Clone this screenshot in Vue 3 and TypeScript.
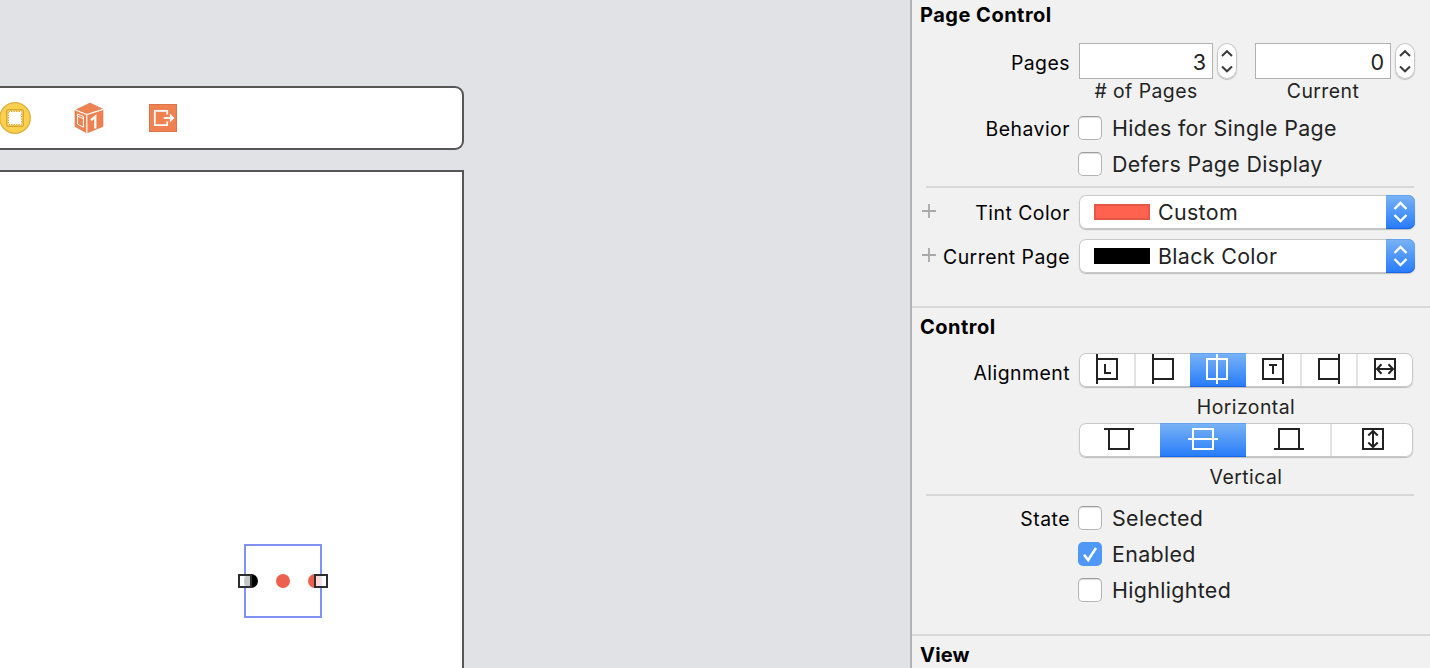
<script setup lang="ts">
import { ref } from 'vue'

interface Segment {
  id: string
  width: number
  divider: boolean
}

const horizontal: Segment[] = [
  { id: 'leading', width: 57, divider: true },
  { id: 'left', width: 54, divider: false },
  { id: 'center', width: 56, divider: false },
  { id: 'trailing', width: 56, divider: true },
  { id: 'right', width: 56, divider: true },
  { id: 'fill', width: 55, divider: false },
]
const vertical: Segment[] = [
  { id: 'top', width: 81, divider: false },
  { id: 'middle', width: 86, divider: false },
  { id: 'bottom', width: 86, divider: true },
  { id: 'stretch', width: 81, divider: false },
]
const hAlign = ref('center')
const vAlign = ref('middle')

const hIcons: Record<string, string> = {
  leading: 'M1 0V30M1 5H21V25H1M9 10V20M8 19H15',
  left: 'M1 0V30M1 5H21V25H1',
  center: 'M1 5H21V25H1ZM11 0V30',
  trailing: 'M21 0V30M21 5H1V25H21M7 11H15M11 11V20',
  right: 'M21 0V30M21 5H1V25H21',
  fill: 'M1 5H21V25H1ZM3 15H19',
}
const vIcons: Record<string, string> = {
  top: 'M0 1H30M5 1V21H25V1',
  middle: 'M5 1H25V21H5ZM0 11H30',
  bottom: 'M0 21H30M5 21V1H25V21',
  stretch: 'M5 1H25V21H5ZM15 3V19',
}

const popups = ref([
  { label: 'Tint Color', value: 'Custom', kind: 'custom' },
  { label: 'Current Page', value: 'Black Color', kind: 'black' },
])
const behaviors = ref([
  { label: 'Behavior', text: 'Hides for Single Page', on: false },
  { label: '', text: 'Defers Page Display', on: false },
])
const states = ref([
  { label: 'State', text: 'Selected', on: false },
  { label: '', text: 'Enabled', on: true },
  { label: '', text: 'Highlighted', on: false },
])
const numbers = ref([
  { value: 3, caption: '# of Pages', cls: 'count' },
  { value: 0, caption: 'Current', cls: 'index' },
])
</script>

<template>
  <div class="window">
    <main class="canvas">
      <div class="dock">
        <svg class="controller" width="32" height="32" viewBox="0 0 32 32">
          <circle cx="16" cy="16" r="15.3" fill="#fad04d" stroke="#deae3f" stroke-width="1.3" />
          <rect x="7.5" y="7.5" width="17" height="17" rx="1.5" fill="#f1c24b" stroke="#d9a63a" />
          <rect x="9" y="9" width="14" height="14" fill="#fff" />
          <rect x="9.5" y="9.5" width="13" height="13" fill="none" stroke="#e3ad35" stroke-dasharray="1.5 1" />
        </svg>
        <svg class="cube" width="30" height="32" viewBox="0 0 30 32">
          <path d="M1 8.2 16 1 29 7.2V24.5L12.8 31 1 24.5Z" fill="#ee8150" />
          <path d="M1 8.2 16 1 29 7.2V24.5L12.8 31 1 24.5Z" fill="none" stroke="#d97448" stroke-width=".6" />
          <path d="M1 7.8 12.8 12.5 29 7.4M12.8 12.5V31" fill="none" stroke="#fff" stroke-width="1.2" />
          <path d="M3.6 12 9.4 14.4V25.2L3.6 22.2ZM3.6 14.2 9.4 16.6" fill="none" stroke="#fff" stroke-width="1" />
          <path d="M17 18.2 21.3 14.6V26.5" fill="none" stroke="#fff" stroke-width="2.2" />
        </svg>
        <svg class="exit" width="28" height="28" viewBox="0 0 28 28">
          <rect x=".5" y=".5" width="27" height="27" fill="#ef8250" stroke="#dc744a" />
          <path d="M18.2 10.6V6.9H5.8V21.1H18.2V17.4" fill="none" stroke="#fff" stroke-width="1.8" />
          <path d="M14.7 14H22" stroke="#fff" stroke-width="1.8" />
          <path d="M20.8 9.6 25.4 14 20.8 18.4Z" fill="#fff" />
        </svg>
      </div>
      <div class="scene">
        <div class="selection">
          <i class="dot first"></i>
          <i class="dot second"></i>
          <i class="dot third"></i>
          <i class="handle west"></i>
          <i class="handle east"></i>
        </div>
      </div>
    </main>

    <aside class="inspector">
      <section class="page-control">
        <h2>Page Control</h2>
        <div class="row pages">
          <label>Pages</label>
          <div v-for="n in numbers" :key="n.caption" class="number" :class="n.cls">
            <div class="entry">
              <span class="field">{{ n.value }}</span>
              <svg class="stepper" width="20" height="36" viewBox="0 0 20 36">
                <path d="M5 13 10 8.2 15 13M5 23.5 10 28.3 15 23.5" fill="none" stroke="#3b3b3b" stroke-width="2" />
              </svg>
            </div>
            <span class="caption">{{ n.caption }}</span>
          </div>
        </div>
        <div v-for="b in behaviors" :key="b.text" class="row check">
          <label>{{ b.label }}</label>
          <span class="box" @click="b.on = !b.on"></span>
          <span class="text">{{ b.text }}</span>
        </div>
        <hr />
        <div v-for="p in popups" :key="p.label" class="row popup-row">
          <svg class="plus" width="14" height="14" viewBox="0 0 14 14">
            <path d="M0 7H14M7 0V14" stroke="#a9a9a9" stroke-width="1.8" />
          </svg>
          <label>{{ p.label }}</label>
          <div class="popup">
            <span class="swatch" :class="p.kind"></span>
            <span class="text">{{ p.value }}</span>
            <svg class="arrows" width="29" height="34" viewBox="0 0 29 34">
              <path d="M8.5 14 14.5 8 20.5 14M8.5 20 14.5 26 20.5 20" fill="none" stroke="#fff" stroke-width="2.3" />
            </svg>
          </div>
        </div>
      </section>

      <section class="control">
        <h2>Control</h2>
        <div class="row align">
          <label>Alignment</label>
          <div class="groups">
            <div class="segments across">
              <button
                v-for="s in horizontal"
                :key="s.id"
                :class="{ on: s.id === hAlign, divider: s.divider }"
                :style="{ width: s.width + 'px' }"
                @click="hAlign = s.id"
              >
                <svg width="22" height="30" viewBox="0 0 22 30">
                  <path :d="hIcons[s.id]" />
                  <path v-if="s.id === 'fill'" d="M7.5 10.3 3 15 7.5 19.7M14.5 10.3 19 15 14.5 19.7" />
                </svg>
              </button>
            </div>
            <span class="caption">Horizontal</span>
            <div class="segments upright">
              <button
                v-for="s in vertical"
                :key="s.id"
                :class="[s.id, { on: s.id === vAlign, divider: s.divider }]"
                :style="{ width: s.width + 'px' }"
                @click="vAlign = s.id"
              >
                <svg width="30" height="22" viewBox="0 0 30 22">
                  <path :d="vIcons[s.id]" />
                  <path v-if="s.id === 'stretch'" d="M10.3 7.5 15 3 19.7 7.5M10.3 14.5 15 19 19.7 14.5" />
                </svg>
              </button>
            </div>
            <span class="caption">Vertical</span>
          </div>
        </div>
        <hr />
        <div v-for="s in states" :key="s.text" class="row check">
          <label>{{ s.label }}</label>
          <span class="box" :class="{ on: s.on }" @click="s.on = !s.on">
            <svg v-if="s.on" width="24" height="24" viewBox="0 0 24 24">
              <path d="M6 12.8 10.2 18 18 6" fill="none" stroke="#fff" stroke-width="2.5" />
            </svg>
          </span>
          <span class="text">{{ s.text }}</span>
        </div>
      </section>

      <section class="view">
        <h2>View</h2>
      </section>
    </aside>
  </div>
</template>

<style>
body {
  margin: 0;
  overflow: hidden;
}
</style>

<style scoped>
* {
  box-sizing: border-box;
}
.window {
  display: flex;
  width: 1430px;
  height: 668px;
  overflow: hidden;
  background: #e1e2e6;
  font: 19.4px/24px Inter, Roboto, 'Liberation Sans', sans-serif;
  color: #232323;
}
.canvas {
  width: 910px;
  padding-top: 86px;
}
.dock {
  display: flex;
  align-items: center;
  width: 464px;
  height: 64px;
  border: 2px solid #565656;
  border-left: 0;
  border-radius: 0 9px 9px 0;
  background: #fff;
}
.controller {
  margin-left: -1px;
}
.cube {
  margin-left: 43px;
}
.exit {
  margin-left: 45px;
}
.scene {
  position: relative;
  width: 464px;
  height: 500px;
  margin-top: 20px;
  border: solid #565656;
  border-width: 2px 2px 0 0;
  background: #fff;
}
.selection {
  position: absolute;
  left: 244px;
  top: 372px;
  width: 78px;
  height: 74px;
  border: 2px solid #8092f5;
}
.dot,
.handle {
  position: absolute;
  width: 14px;
  height: 14px;
  top: 28px;
}
.dot {
  border-radius: 50%;
  background: #ee5f4d;
}
.first {
  left: -2px;
  background: #000;
}
.second {
  left: 30px;
}
.third {
  left: 62px;
}
.handle {
  border: 2px solid #2e2e2e;
  background: rgba(255, 255, 255, 0.78);
}
.west {
  left: -8px;
}
.east {
  left: 68px;
}
.inspector {
  width: 520px;
  border-left: 2px solid #b2b3b6;
  background: #f1f1f1;
}
section {
  border-bottom: 2px solid #d8d8d8;
}
.page-control {
  height: 308px;
}
.control {
  height: 328px;
}
.view {
  border: 0;
}
h2 {
  margin: 0;
  padding: 7px 0 0 8px;
  font-size: 20px;
  line-height: 24px;
  font-weight: 700;
  letter-spacing: 0.5px;
  color: #000;
}
.page-control h2 {
  padding-top: 3px;
}
.view h2 {
  letter-spacing: 0.2px;
}
.row {
  display: flex;
}
label {
  width: 158px;
  margin-right: -1px;
  text-align: right;
  letter-spacing: 0.48px;
  color: #000;
  white-space: nowrap;
}
hr {
  height: 2px;
  margin: 0 16px 0 14px;
  border: 0;
  background: #d8d8d8;
}
.pages {
  height: 67px;
  margin-top: 16px;
}
.pages label {
  padding-top: 8px;
}
.number {
  display: flex;
  flex-direction: column;
}
.count {
  margin-left: 10px;
}
.index {
  margin-left: 18px;
}
.entry {
  display: flex;
  gap: 4px;
}
.field {
  width: 134px;
  height: 36px;
  padding: 0 6px;
  border: 1px solid #b1b1b1;
  background: #fff;
  font-size: 21.6px;
  line-height: 36px;
  text-align: right;
}
.index .field {
  width: 136px;
}
.stepper {
  border-radius: 10px;
  background: #fff;
  box-shadow: inset 0 0 0 1px #c6c6c6, 0 1px 1px #bbb;
}
.caption {
  width: 134px;
  text-align: center;
  letter-spacing: 0.45px;
  white-space: nowrap;
}
.index .caption {
  width: 136px;
}
.check {
  height: 36px;
  align-items: center;
}
.check label {
  padding-top: 2px;
}
.text {
  font-size: 21.4px;
  line-height: 26px;
  letter-spacing: 0.34px;
  white-space: nowrap;
}
.box {
  width: 24px;
  height: 24px;
  margin: 0 10px 0 9px;
  border: 1px solid #b4b4b4;
  border-top-color: #9d9d9d;
  border-radius: 5px;
  background: #fff;
  box-shadow: inset 0 1px 1px #ddd;
}
.box.on {
  border: 0;
  background: #4f98f7;
  box-shadow: none;
}
.box svg {
  display: block;
}
.page-control hr {
  margin-top: 4px;
}
.popup-row {
  height: 34px;
  margin: 7px 0 10px 10px;
}
.popup-row + .popup-row {
  margin-top: 0;
}
.plus {
  margin-top: 9px;
}
.popup-row label {
  width: 134px;
  padding-top: 6px;
}
.popup {
  display: flex;
  width: 336px;
  height: 34px;
  margin-left: 10px;
  padding-left: 15px;
  align-items: center;
  border-radius: 7px;
  background: #fff;
  box-shadow: inset 0 0 0 1px #c9c9c9, 0 1px 1px #bbb;
}
.popup .text {
  margin-left: 8px;
}
.swatch {
  width: 56px;
  height: 16px;
}
.swatch.custom {
  border: 2px solid #e65746;
  background: #ff624f;
}
.swatch.black {
  background: #000;
}
.arrows {
  margin-left: auto;
  border-radius: 0 7px 7px 0;
  background: linear-gradient(#7ab3f5, #267bfa);
  box-shadow: inset 0 -1px #1767ed, inset 0 1px #62a1ed;
}
.align {
  margin-top: 14px;
}
.align label {
  padding-top: 8px;
}
.groups {
  display: flex;
  flex-direction: column;
  margin-left: 10px;
}
.segments {
  display: flex;
  width: 334px;
  height: 34px;
  overflow: hidden;
  border-radius: 7px;
  background: #fff;
  box-shadow: inset 0 0 0 1px #c9c9c9, 0 1px 1px #bbb;
}
.groups .caption {
  width: 334px;
  height: 36px;
  padding-top: 8px;
}
button {
  display: flex;
  padding: 1px 0 0 16px;
  border: 0;
  background: none;
}
button svg {
  flex: none;
  fill: none;
  stroke: #222;
  stroke-width: 2;
}
.across button:first-child {
  padding-left: 17px;
}
.upright button {
  padding: 5px 0 0 28px;
}
.upright .top {
  padding-left: 25px;
}
.upright .stretch {
  padding-left: 26px;
}
.divider {
  background: linear-gradient(#e2e2e2, #e2e2e2) right 0 top 1px / 2px 32px no-repeat;
}
button.on {
  background: linear-gradient(#7ab3f5, #267bfa);
  box-shadow: inset 0 -1px #1767ed, inset 0 1px #62a1ed;
}
button.on svg {
  stroke: #fff;
}
.control hr {
  margin-top: 1px;
  margin-bottom: 4px;
}
</style>
